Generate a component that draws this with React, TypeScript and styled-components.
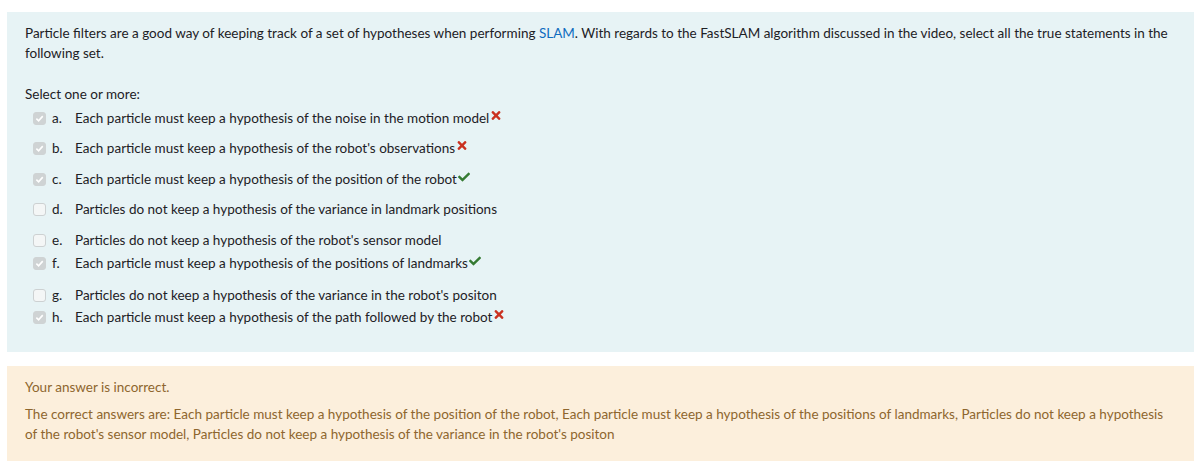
import React from "react";
import styled, { createGlobalStyle } from "styled-components";
import { FaCheck, FaTimes } from "react-icons/fa";

const GlobalStyle = createGlobalStyle`
  body {
    margin: 0;
    background: #ffffff;
    font-family: Lato, "Open Sans", sans-serif;
  }
`;

type Mark = "right" | "wrong" | null;

const options: { key: string; text: string; checked: boolean; mark: Mark; gap: number }[] = [
  { key: "a", text: "Each particle must keep a hypothesis of the noise in the motion model", checked: true, mark: "wrong", gap: 0 },
  { key: "b", text: "Each particle must keep a hypothesis of the robot's observations", checked: true, mark: "wrong", gap: 10 },
  { key: "c", text: "Each particle must keep a hypothesis of the position of the robot", checked: true, mark: "right", gap: 11 },
  { key: "d", text: "Particles do not keep a hypothesis of the variance in landmark positions", checked: false, mark: null, gap: 10 },
  { key: "e", text: "Particles do not keep a hypothesis of the robot's sensor model", checked: false, mark: null, gap: 11 },
  { key: "f", text: "Each particle must keep a hypothesis of the positions of landmarks", checked: true, mark: "right", gap: 3 },
  { key: "g", text: "Particles do not keep a hypothesis of the variance in the robot's positon", checked: false, mark: null, gap: 12 },
  { key: "h", text: "Each particle must keep a hypothesis of the path followed by the robot", checked: true, mark: "wrong", gap: 2 },
];

function App() {
  return (
    <Page>
      <GlobalStyle />
      <QuestionPanel>
        <Prompt>
          Particle filters are a good way of keeping track of a set of hypotheses when performing{" "}
          <Link>SLAM</Link>. With regards to the FastSLAM algorithm discussed in the video, select all the
          true statements in the following set.
        </Prompt>
        <SelectHint>Select one or more:</SelectHint>
        <OptionList>
          {options.map((o) => (
            <OptionRow key={o.key} $gap={o.gap}>
              <Box $checked={o.checked}>
                {o.checked && (
                  <svg width="9" height="9" viewBox="0 0 10 10">
                    <path d="M1.5 5.2 L4 7.6 L8.6 2.4" fill="none" stroke="#fff" strokeWidth="1.8" />
                  </svg>
                )}
              </Box>
              <Letter>{o.key}.</Letter>
              <OptionText>
                {o.text}
                {o.mark === "wrong" && <WrongIcon />}
                {o.mark === "right" && <RightIcon />}
              </OptionText>
            </OptionRow>
          ))}
        </OptionList>
      </QuestionPanel>
      <FeedbackPanel>
        <FeedbackLine>Your answer is incorrect.</FeedbackLine>
        <FeedbackLine>
          The correct answers are: Each particle must keep a hypothesis of the position of the robot, Each
          particle must keep a hypothesis of the positions of landmarks, Particles do not keep a hypothesis of
          the robot's sensor model, Particles do not keep a hypothesis of the variance in the robot's positon
        </FeedbackLine>
      </FeedbackPanel>
    </Page>
  );
}
export default App;

const Page = styled.div`
  padding: 12px 6px 0 7px;
  display: flex;
  flex-direction: column;
  gap: 14px;
`;

const QuestionPanel = styled.div`
  background-color: #e7f3f5;
  padding: 11px 18px 25px 18px;
  color: #1d2125;
  font-size: 13.5px;
  line-height: 20px;
`;

const Prompt = styled.div`
  padding-right: 6px;
`;

const Link = styled.span`
  color: #0f6cbf;
`;

const SelectHint = styled.div`
  margin-top: 21px;
`;

const OptionList = styled.div`
  display: flex;
  flex-direction: column;
  margin-top: 4px;
`;

const OptionRow = styled.div<{ $gap: number }>`
  display: flex;
  align-items: center;
  height: 20px;
  margin-top: ${(p) => p.$gap}px;
  padding-left: 8px;
`;

const Box = styled.span<{ $checked: boolean }>`
  width: 13px;
  height: 13px;
  box-sizing: border-box;
  border-radius: 3px;
  display: inline-flex;
  align-items: center;
  justify-content: center;
  background: ${(p) => (p.$checked ? "#cfd3d4" : "#f4f6f6")};
  border: 1px solid ${(p) => (p.$checked ? "#cfd3d4" : "#cdd1d2")};
  margin-right: 6px;
`;

const Letter = styled.span`
  width: 23px;
`;

const OptionText = styled.span`
  display: inline-flex;
  align-items: center;
`;

const WrongIcon = styled(FaTimes)`
  color: #ca3120;
  width: 12px;
  height: 13px;
  margin-left: 1px;
  margin-top: -5px;
`;

const RightIcon = styled(FaCheck)`
  color: #357a32;
  width: 12px;
  height: 12px;
  margin-left: 1px;
  margin-top: -5px;
`;

const FeedbackPanel = styled.div`
  background-color: #fcefdc;
  padding: 11px 18px 17px 18px;
  color: #8e662e;
  font-size: 13.5px;
  line-height: 20px;
  display: flex;
  flex-direction: column;
  gap: 7px;
`;

const FeedbackLine = styled.div``;
